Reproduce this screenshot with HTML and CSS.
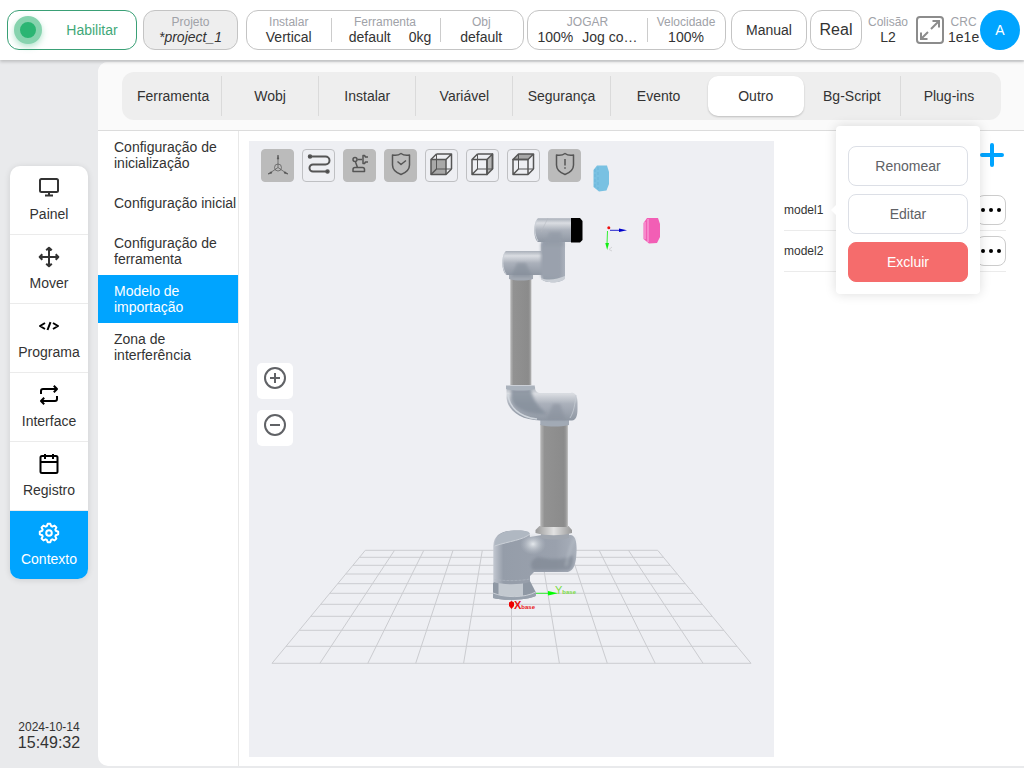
FILE: index.html
```html
<!DOCTYPE html>
<html lang="pt">
<head>
  <meta charset="UTF-8" />
  <title>Contexto - Modelo de importação</title>
  <link rel="stylesheet" href="styles.css">
</head>
<body>
  <header class="topbar">
    <button class="box enable"><span class="led"></span><span class="enable-text">Habilitar</span></button>
    <button class="box project"><span class="label">Projeto</span><em class="value">*project_1</em></button>
    <div class="box group">
      <div class="cell"><span class="label">Instalar</span><span class="value">Vertical</span></div>
      <div class="cell cell-wide"><span class="label">Ferramenta</span><span class="value pair tool"><span>default</span><span>0kg</span></span></div>
      <div class="cell"><span class="label">Obj</span><span class="value">default</span></div>
    </div>
    <div class="box group jog">
      <div class="cell cell-jog"><span class="label">JOGAR</span><span class="value pair"><span>100%</span><span>Jog co…</span></span></div>
      <div class="cell"><span class="label">Velocidade</span><span class="value">100%</span></div>
    </div>
    <button class="box mode">Manual</button>
    <button class="box real">Real</button>
    <div class="stat collision"><span class="label">Colisão</span><span class="value">L2</span></div>
    <button class="fullscreen" aria-label="Tela cheia">
      <svg width="28" height="28" viewBox="0 0 28 28" fill="none" stroke="#8c8c8c" stroke-width="2">
        <rect x="1" y="1" width="26" height="26" rx="3"/>
        <path d="M15 13L23 5M16.500 5H23V11.500M12 16L5 23M5 16.500V23H11.500"/>
      </svg>
    </button>
    <div class="stat crc"><span class="label">CRC</span><span class="value">1e1e</span></div>
    <button class="avatar">A</button>
  </header>

  <div class="layout">
    <aside class="sidebar">
      <nav class="main-nav">
        <a href="#">
          <svg viewBox="0 0 24 24" class="icon"><rect x="3" y="3" width="18" height="13" rx="1.500"/><path d="M12 16v4M8 19.500h8"/></svg>
          Painel
        </a>
        <a href="#">
          <svg viewBox="0 0 24 24" class="icon"><path d="M12 3v18M3 12h18M9.200 5.300L12 2.700l2.800 2.600M9.200 18.700L12 21.300l2.800-2.600M5.300 9.200L2.700 12l2.600 2.800M18.700 9.200l2.600 2.800-2.600 2.800"/></svg>
          Mover
        </a>
        <a href="#">
          <svg viewBox="0 0 24 24" class="icon dark"><path d="M8 9l-5 3 5 3M16 9l5 3-5 3M13.500 8.200l-3 7.800"/></svg>
          Programa
        </a>
        <a href="#">
          <svg viewBox="0 0 24 24" class="icon dark"><path d="M4 11V8a2 2 0 0 1 2-2h14M16.800 2.800L20 6l-3.200 3.200M20 13v3a2 2 0 0 1-2 2H4M7.200 14.800L4 18l3.200 3.200"/></svg>
          Interface
        </a>
        <a href="#">
          <svg viewBox="0 0 24 24" class="icon dark"><rect x="3.500" y="4" width="17" height="17" rx="1.500"/><path d="M3.500 10h17M8 2v5M16 2v5"/></svg>
          Registro
        </a>
        <a href="#" class="active">
          <svg viewBox="0 0 24 24" class="icon"><path d="M9.800 5.200L10.700 2.800H13.300L14.200 5.200L15.300 5.700L17.600 4.600L19.400 6.400L18.300 8.700L18.800 9.800L21.200 10.700V13.300L18.800 14.200L18.300 15.300L19.400 17.600L17.600 19.400L15.300 18.300L14.200 18.800L13.300 21.200H10.700L9.800 18.800L8.700 18.300L6.400 19.400L4.600 17.600L5.700 15.300L5.200 14.200L2.800 13.300V10.700L5.200 9.800L5.700 8.700L4.600 6.400L6.400 4.600L8.700 5.700Z"/><circle cx="12" cy="12" r="2.800"/></svg>
          Contexto
        </a>
      </nav>
      <div class="clock">
        <span class="date">2024-10-14</span>
        <span class="time">15:49:32</span>
      </div>
    </aside>

    <main class="content">
      <div class="tabs-wrap">
        <div class="tabs" role="tablist">
          <button role="tab">Ferramenta</button>
          <button role="tab">Wobj</button>
          <button role="tab">Instalar</button>
          <button role="tab">Variável</button>
          <button role="tab">Segurança</button>
          <button role="tab">Evento</button>
          <button role="tab" class="active" aria-selected="true">Outro</button>
          <button role="tab">Bg-Script</button>
          <button role="tab">Plug-ins</button>
        </div>
      </div>

      <div class="panel">
        <nav class="submenu">
          <a href="#">Configuração de inicialização</a>
          <a href="#">Configuração inicial</a>
          <a href="#">Configuração de ferramenta</a>
          <a href="#" class="active">Modelo de importação</a>
          <a href="#">Zona de interferência</a>
        </nav>

        <section class="viewer">
          <svg class="scene" viewBox="249 141 525 616">
            <defs>
              <linearGradient id="metalH" x1="0" y1="0" x2="0" y2="1">
                <stop offset="0" stop-color="#a9afb9"/><stop offset=".2" stop-color="#dadde2"/><stop offset=".5" stop-color="#abb1bb"/><stop offset="1" stop-color="#8f97a3"/>
              </linearGradient>
              <linearGradient id="metalV" x1="0" y1="0" x2="1" y2="0">
                <stop offset="0" stop-color="#c3c8d1"/><stop offset=".12" stop-color="#959da9"/><stop offset=".75" stop-color="#9aa1ad"/><stop offset="1" stop-color="#a9b0bb"/>
              </linearGradient>
              <linearGradient id="tube" x1="0" y1="0" x2="1" y2="0">
                <stop offset="0" stop-color="#b8b8b8"/><stop offset=".15" stop-color="#929292"/><stop offset=".85" stop-color="#8b8b8b"/><stop offset=".93" stop-color="#999"/><stop offset="1" stop-color="#c4c4c4"/>
              </linearGradient>
              <linearGradient id="ring" x1="0" y1="0" x2="1" y2="0">
                <stop offset="0" stop-color="#999"/><stop offset=".5" stop-color="#e2e2e2"/><stop offset="1" stop-color="#999"/>
              </linearGradient>
              <radialGradient id="shine">
                <stop offset="0" stop-color="#e4e8ec"/><stop offset="1" stop-color="#b9c0c9" stop-opacity="0"/>
              </radialGradient>
              <filter id="soft" x="-30%" y="-30%" width="160%" height="160%"><feGaussianBlur stdDeviation="1.800"/></filter>
            </defs>

            <!-- floor grid -->
            <g stroke="#cbccd0" stroke-width="1" fill="none">
              <path d="M365.300 550.300H657.700M359.500 557.300H663.500M353 565.300H670M345.700 574H677.300M337.700 583.700H685.300M329.800 593.300H693.200M320.700 604.300H702.300M310.800 616.300H712.200M299.200 630.300H723.800M286 646.300H737M272 663.300H751"/>
              <path d="M365.300 550.300L272 663.300M394.500 550.300L319.900 663.300M423.800 550.300L367.800 663.300M453 550.300L415.700 663.300M482.300 550.300L463.600 663.300M511.500 550.300V663.300M540.700 550.300L559.400 663.300M570 550.300L607.300 663.300M599.200 550.300L655.200 663.300M628.500 550.300L703.100 663.300M657.700 550.300L751 663.300"/>
            </g>

            <!-- base -->
            <path d="M493 583L495 581H530L535.700 592V596C529 600 503 601 493 598Z" fill="#8f98a4"/>
            <path d="M498.500 583H523V596.500H498.500Z" fill="#c3c9d0"/>
            <path d="M493 593C505 598 525 598 535.700 592V596C529 600 503 601 493 598Z" fill="#98a1ad"/>
            <path d="M493 593C505 598 525 598 535.700 592" stroke="#c9ced5" fill="none"/>
            <path d="M493.300 546C494 535 501 531 514 530.500C524 530 530 531 530 537L542 535H571C576 536 577 544 576.500 552C576 564 574 570 568 572H534L530 576V582C520 585 503 585 493.300 582Z" fill="url(#metalV)"/>
            <path d="M533 570C529 565 531 559 538 557C552 560 566 560 573 555C574 564 572 569 568 570Z" fill="#808894" opacity=".7" filter="url(#soft)"/>
            <path d="M494.500 546C495 535 503 531 514 530.500C524 530 530 531 530 534C523 540 510 541 494.500 546Z" fill="#b0b8c2"/>
            <path d="M494.500 546C510 541 523 540 530 534" stroke="#cbd0d7" fill="none"/>
            <ellipse cx="533" cy="544" rx="13" ry="11" fill="url(#shine)"/>
            <path d="M575 538C571 545 568 556 566 566" stroke="#c3cad1" stroke-width="2" fill="none" opacity=".5" filter="url(#soft)"/>
            <path d="M494.500 579.500C505 581 520 581 530 579" stroke="#b2b9c2" stroke-dasharray="3 1" stroke-width=".6" fill="none"/>

            <!-- lower arm -->
            <path d="M541 532H569V538C560 540 549 540 541 538Z" fill="#a0a6af"/>
            <path d="M539.500 526H568.500L572 530V533C562 536 545 536 535.500 533V530Z" fill="url(#ring)"/>
            <rect x="540.300" y="424" width="27.700" height="103" fill="url(#tube)"/>
            <!-- elbow -->
            <path d="M540.300 416H569V425C560 427 549 427 540.300 425Z" fill="#a2aab5"/>
            <path d="M506.500 387H535C535 391 537 393 541 393H571C575 392 577.500 396 577.500 402V409C577.500 416 576 420 572 420.500H540C521 420 508 411 506.500 398Z" fill="url(#metalH)"/>
            <path d="M511 389H531C532 398 537 406 547 414C524 415 512 407 511 398Z" fill="#858f9b" opacity=".85" filter="url(#soft)"/>
            <path d="M508 394C509 407 519 417 537 419" fill="none" stroke="#cfd5dc" stroke-width="1.500"/>
            <path d="M553 404L546 420H566L560 404Z" fill="#8a929e" opacity=".6" filter="url(#soft)"/>
            <path d="M576 395C575 403 574 412 570 418" fill="none" stroke="#c4cad2" stroke-width=".8"/>
            <path d="M506 385.500H534.800V389C526 391 514 391 506 389Z" fill="#aab2bc"/>
            <!-- upper arm -->
            <rect x="510.300" y="279" width="21.200" height="106" fill="url(#tube)"/>
            <!-- wrist -->
            <path d="M509 272H533V279C526 281 516 281 509 279Z" fill="#a3a9b3"/>
            <path d="M541 238H565V278C561 284 545 283 541 279Z" fill="url(#metalV)"/>
            <path d="M506 251H541L543 255V275H507C501 273 501 254 506 251Z" fill="url(#metalH)"/>
            <path d="M541 243H560V277H541Z" fill="#9aa1ad" filter="url(#soft)"/>
            <path d="M517 263L511 277H532L526 263Z" fill="#858e9a" opacity=".6" filter="url(#soft)"/>
            <path d="M505 253C502 257 502 269 506 274" fill="none" stroke="#ccd1d8" stroke-width="1"/>
            <path d="M541 278C548 281 558 279 565 276V279C559 284 545 283 541 279Z" fill="#cacfd6"/>
            <path d="M538 218.300H572V242H538C533 239 533 222 538 218.300Z" fill="url(#metalH)"/>
            <path d="M549 232C548 238 544 242 542 246H564C562 241 562 236 561 232Z" fill="#949ca8" opacity=".8" filter="url(#soft)"/>
            <path d="M537 220C534 225 534 235 538 241" fill="none" stroke="#ccd1d8" stroke-width="1"/>
            <path d="M548 218L541 232" stroke="#b2b7bf" stroke-width=".5"/>
            <path d="M571 218H580L582.500 221V240L580 242.500H571Z" fill="#000"/>

            <!-- imported models -->
            <path d="M597 165.500H607L609 172V184L606.500 190.500L599 191.500L593.500 187V170Z" fill="#79c1e2"/>
            <path d="M595 169V187M598 167V189" stroke="#68b1d5" stroke-width=".7" stroke-dasharray="3 2"/>
            <path d="M647 218H658L660 224V237L657 243L649 243.500L643.500 239V223Z" fill="#f25eb5"/>
            <path d="M648 219V242M645 222V239" stroke="#f787ca" stroke-width="2"/>

            <!-- tool axes -->
            <path d="M610 230.300H620" stroke="#22c" stroke-width="1"/><path d="M619 228.500L627 230.300L619 232Z" fill="#00c"/>
            <path d="M607.500 231L607 244" stroke="#3e3" stroke-width="1"/><path d="M605.300 243H609L607.200 250Z" fill="#1e1"/>
            <circle cx="608.800" cy="227.700" r="1.500" fill="#e11"/>
            <path d="M612 247L609 249.500L612 251" fill="none" stroke="#d3d3d6"/>

            <!-- base axes -->
            <path d="M536 593.300H549" stroke="#3e3" stroke-width="1"/><path d="M548 591L558 593.300L548 595.500Z" fill="#0f0"/>
            <path d="M509 602.500L511.500 601L514 602.500L514 606L511.500 609L509 606Z" fill="#e00"/>
            <text x="514" y="609" class="axis-x">X<tspan class="axis-sub">base</tspan></text>
            <text x="555" y="594" class="axis-y">Y<tspan class="axis-sub">base</tspan></text>
          </svg>

          <div class="tools">
            <button class="on" aria-label="Eixos">
              <svg viewBox="1 1 31 31"><g stroke-width=".7"><path d="M17 18.500V9M17 18.500L9 24M17 18.500L25 24"/><circle cx="17" cy="18.500" r="3.500"/><path d="M17 6l-.7 4h1.400zM7 25l4-1-.8-1.200zM27 25l-4-1 .8-1.200z" fill="#555"/></g></svg>
            </button>
            <button aria-label="Trajetória">
              <svg viewBox="1 1 31 31"><path d="M8 7.500H23.500a4 4 0 0 1 0 8H11a3.500 3.500 0 0 0 0 7H25" stroke-width="2"/><circle cx="8" cy="7.500" r="1.500" fill="#444"/><circle cx="25.500" cy="22.500" r="1.500" fill="#444"/></svg>
            </button>
            <button class="on" aria-label="Robô">
              <svg viewBox="1 1 31 31"><circle cx="12" cy="10.500" r="2"/><path d="M14.500 10.500H19M12.500 13l2 5.500M10 22.500v-2a2 2 0 0 1 2-2h7.500a2 2 0 0 1 2 2v2zM25 8h-2.500l-1-1.500h-1.500v8h1.500l1-1.500h2.500"/></svg>
            </button>
            <button class="on" aria-label="Proteção">
              <svg viewBox="1 1 31 31"><path d="M17 4.500C15 6 11 6.500 8.500 6V16C8.500 21 13 24 17 25.500C21 24 25.500 21 25.500 16V6C23 6.500 19 6 17 4.500ZM13.500 12.500l3.500 3 5-4"/></svg>
            </button>
            <button aria-label="Vista frontal">
              <svg viewBox="1 1 31 31"><path d="M6 10.500H21V25.500H6Z" fill="#a8a8a8"/><path d="M11.500 5V20H26.500" stroke-width="1"/><path d="M11.500 5H26.500V20M6 10.500L11.500 5M21 10.500L26.500 5M21 25.500L26.500 20M6 25.500L11.500 20"/></svg>
            </button>
            <button aria-label="Vista lateral">
              <svg viewBox="1 1 31 31"><path d="M21 10.500L26.500 5V20L21 25.500Z" fill="#b5b5b5"/><path d="M11.500 5V20H26.500" stroke-width="1"/><path d="M6 10.500H21V25.500H6ZM11.500 5H26.500V20M6 10.500L11.500 5M6 25.500L11.500 20"/></svg>
            </button>
            <button aria-label="Vista superior">
              <svg viewBox="1 1 31 31"><path d="M6 10.500L11.500 5H26.500L21 10.500Z" fill="#a8a8a8"/><path d="M11.500 5V20H26.500" stroke-width="1"/><path d="M6 10.500H21V25.500H6ZM26.500 5V20M21 25.500L26.500 20M6 25.500L11.500 20"/></svg>
            </button>
            <button class="on" aria-label="Alerta">
              <svg viewBox="1 1 31 31"><path d="M17 4.500C15 6 11 6.500 8.500 6V16C8.500 21 13 24 17 25.500C21 24 25.500 21 25.500 16V6C23 6.500 19 6 17 4.500ZM17 10v6.500M17 18.200v1.500"/></svg>
            </button>
          </div>

          <div class="zoom">
            <button aria-label="Aumentar"><svg viewBox="0 0 22 22"><circle cx="11" cy="11" r="10"/><path d="M11 6v10M6 11h10"/></svg></button>
            <button aria-label="Diminuir"><svg viewBox="0 0 22 22"><circle cx="11" cy="11" r="10"/><path d="M6 11h10"/></svg></button>
          </div>
        </section>

        <section class="models">
          <div class="models-head">
            <button class="add" aria-label="Adicionar">
              <svg width="24" height="24" viewBox="0 0 24 24"><path d="M12 2v20M2 12h20" stroke="#00a4ff" stroke-width="4" stroke-linecap="round"/></svg>
            </button>
          </div>
          <div class="model-row">
            <span>model1</span>
            <button class="more" aria-label="Opções"><i></i><i></i><i></i></button>
            <div class="popover">
              <button>Renomear</button>
              <button>Editar</button>
              <button class="danger">Excluir</button>
            </div>
          </div>
          <div class="model-row">
            <span>model2</span>
            <button class="more" aria-label="Opções"><i></i><i></i><i></i></button>
          </div>
        </section>
      </div>
    </main>
  </div>
</body>
</html>
```
FILE: styles.css
```css
* {
  box-sizing: border-box;
}
body {
  margin: 0;
  min-height: 100vh;
  display: flex;
  flex-direction: column;
  background: #e9eaec;
  color: #333;
  font-family: Arial, "Liberation Sans", sans-serif;
  font-size: 14px;
}
button {
  font: inherit;
  color: inherit;
  padding: 0;
  border: none;
  background: none;
  cursor: pointer;
}
a {
  color: inherit;
  text-decoration: none;
}

/* top bar */
.topbar {
  position: relative;
  z-index: 1;
  display: flex;
  align-items: center;
  height: 60px;
  padding: 0 4px 0 7px;
  background: #fff;
  box-shadow: 0 2px 3px rgba(0,0,0,0.18);
}
.box {
  flex: none;
  height: 40px;
  border: 1px solid #c4c4c4;
  border-radius: 12px;
  background: #fff;
}
.label,
.value {
  display: block;
  text-align: center;
  white-space: nowrap;
}
.label {
  font-size: 12px;
  line-height: 14px;
  color: #a0a2a8;
}
.value {
  font-size: 14px;
  line-height: 16px;
}
.enable {
  display: flex;
  align-items: center;
  width: 130px;
  margin-right: 6px;
  padding: 0 6px;
  border-color: #3aa076;
  color: #3fa878;
}
.enable-text {
  flex: 1;
  padding-left: 12px;
}
.led {
  width: 28px;
  height: 28px;
  border: 6px solid #86d3ae;
  border-radius: 50%;
  background: #2bb573;
  box-shadow: 0 3px 6px rgba(43,181,115,0.35);
}
.project {
  width: 95px;
  margin-right: 8px;
  background: #eee;
}
.group {
  display: flex;
  align-items: center;
  width: 278px;
  margin-right: 3px;
}
.cell {
  flex: 1;
  position: relative;
}
.cell-wide {
  flex: 0 0 109px;
}
.cell-jog {
  flex: 0 0 119px;
}
.cell + .cell::before {
  content: "";
  position: absolute;
  left: 0;
  top: 3px;
  height: 24px;
  border-left: 1px solid #ccc;
}
.pair {
  display: flex;
  justify-content: center;
  gap: 9px;
}
.tool {
  gap: 18px;
  padding-left: 10px;
}
.jog {
  width: 199px;
  margin-right: 5px;
}
.mode {
  width: 76px;
  margin-right: 3px;
}
.real {
  width: 52px;
  font-size: 16px;
}
.collision {
  margin: 0 8px 0 6px;
}
.fullscreen svg {
  display: block;
}
.crc {
  margin-left: 4px;
}
.avatar {
  flex: none;
  width: 40px;
  height: 40px;
  margin-left: auto;
  border-radius: 50%;
  background: #00a4ff;
  color: #fff;
}

/* left side */
.layout {
  flex: 1;
  display: flex;
  padding: 2px 0;
}
.sidebar {
  flex: none;
  width: 98px;
  display: flex;
  flex-direction: column;
  justify-content: space-between;
  padding: 104px 10px 14px;
}
.main-nav {
  border-radius: 10px;
  overflow: hidden;
  background: #fff;
  box-shadow: 0 1px 6px rgba(0,0,0,0.12);
}
.main-nav a {
  display: flex;
  flex-direction: column;
  align-items: center;
  gap: 6px;
  padding: 10px 0 12px;
  line-height: 16px;
  border-bottom: 1px solid #ebebeb;
}
.main-nav a.active {
  background: #00a4ff;
  color: #fff;
  border-bottom: none;
}
.icon {
  width: 24px;
  height: 24px;
  fill: none;
  stroke: currentColor;
  stroke-width: 2;
  stroke-linejoin: round;
}
.icon.dark {
  stroke: #000;
}
.main-nav,
.clock {
  width: 78px;
}
.clock {
  text-align: center;
}
.clock span {
  display: block;
}
.date {
  font-size: 12px;
  line-height: 14px;
}
.time {
  font-size: 16px;
  line-height: 18px;
}

/* main area */
.content {
  flex: 1;
  display: flex;
  flex-direction: column;
  min-width: 0;
  border-radius: 10px 0 0 10px;
  background: #fff;
}
.tabs-wrap {
  padding: 10px 23px 10px 24px;
  background: #fafafa;
  border-bottom: 1px solid #dcdcdc;
  border-radius: 10px 0 0 0;
}
.tabs {
  display: flex;
  padding: 4px 3px;
  border-radius: 12px;
  background: #eee;
}
.tabs button {
  flex: 1 1 0;
  height: 40px;
  border-right: 1px solid #dadada;
}
.tabs button:last-child,
.tabs button:nth-child(6) {
  border-right-color: transparent;
}
.tabs .active {
  border-right: none;
  border-radius: 10px;
  background: #fff;
  box-shadow: 0 1px 2px rgba(0,0,0,0.2);
}
.panel {
  flex: 1;
  display: flex;
}
.submenu {
  flex: none;
  width: 141px;
  border-right: 1px solid #e8e8e8;
}
.submenu a {
  display: flex;
  align-items: center;
  height: 48px;
  padding-left: 16px;
  line-height: 16px;
}
.submenu .active {
  background: #00a4ff;
  color: #fff;
}

/* 3d view */
.viewer {
  flex: 1;
  position: relative;
  display: flex;
  flex-direction: column;
  margin: 10px 10px 9px;
  padding: 8px;
  background: #eeeff3;
}
.scene {
  position: absolute;
  inset: 0;
  width: 100%;
  height: 100%;
}
.axis-x,
.axis-y {
  font-size: 11px;
  font-weight: bold;
  fill: #e81313;
}
.axis-y {
  font-weight: normal;
  fill: #7bdc45;
}
.axis-sub {
  font-size: 6px;
  font-weight: bold;
}
.tools {
  position: relative;
  display: flex;
  gap: 8px;
  padding-left: 4px;
}
.tools button {
  width: 33px;
  height: 33px;
  border: 1px solid #bfc0c3;
  border-radius: 4px;
}
.tools .on {
  background: #bbb;
  border-color: #bbb;
}
.tools svg {
  display: block;
  width: 31px;
  height: 31px;
  fill: none;
  stroke: #555;
  stroke-width: 1.5;
  stroke-linejoin: round;
}
.zoom {
  position: relative;
  display: flex;
  flex-direction: column;
  gap: 11px;
  width: 36px;
  margin-top: 181px;
}
.zoom button {
  height: 36px;
  padding-bottom: 6px;
  border-radius: 5px;
  background: #fff;
}
.zoom svg {
  display: block;
  width: 22px;
  height: 22px;
  margin: 0 auto;
  fill: none;
  stroke: #606266;
  stroke-width: 2;
}

/* model list */
.models {
  flex: none;
  width: 240px;
  padding: 10px 18px 10px 0;
}
.models-head {
  display: flex;
  justify-content: flex-end;
  height: 49px;
}
.add {
  width: 28px;
  height: 28px;
}
.add svg {
  display: block;
  margin: 0 auto;
}
.model-row {
  position: relative;
  display: flex;
  align-items: center;
  justify-content: space-between;
  height: 41px;
  border-bottom: 1px solid #ebebeb;
  font-size: 12px;
}
.more {
  display: flex;
  align-items: center;
  justify-content: center;
  gap: 4px;
  width: 30px;
  height: 30px;
  border: 1px solid #ccc;
  border-radius: 8px;
}
.more i {
  width: 4px;
  height: 4px;
  border-radius: 50%;
  background: #000;
}
.popover {
  position: absolute;
  z-index: 2;
  top: -64px;
  right: 26px;
  display: flex;
  flex-direction: column;
  gap: 8px;
  width: 144px;
  padding: 20px 12px 12px;
  border-radius: 4px;
  background: #fff;
  box-shadow: 0 0 12px rgba(0,0,0,0.14);
}
.popover::before {
  content: "";
  position: absolute;
  left: -5px;
  top: 79px;
  border: 5px solid transparent;
  border-left: none;
  border-right-color: #fff;
}
.popover button {
  height: 40px;
  border: 1px solid #dcdfe6;
  border-radius: 8px;
  font-size: 14px;
  color: #606266;
}
.popover .danger {
  background: #f56c6c;
  border-color: #f56c6c;
  color: #fff;
}
```
